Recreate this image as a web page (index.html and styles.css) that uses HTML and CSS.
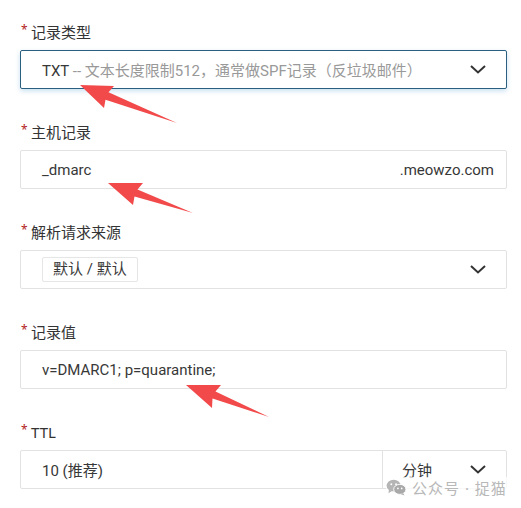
FILE: index.html
```html
<!DOCTYPE html>
<html lang="zh-CN">
<head>
<meta charset="utf-8">
<link rel="stylesheet" href="styles.css">
</head>
<body>
<div class="form">
  <div class="field">
    <div class="label"><span class="req">*</span>记录类型</div>
    <div class="box box-active">
      <span class="value">TXT <span class="hint">-- 文本长度限制512，通常做SPF记录（反垃圾邮件）</span></span>
      <svg class="chev" viewBox="0 0 16 9" width="16" height="9"><path d="M1 1 L8 7.5 L15 1" fill="none" stroke="#333" stroke-width="2"/></svg>
    </div>
  </div>
  <div class="field">
    <div class="label"><span class="req">*</span>主机记录</div>
    <div class="box">
      <span class="value">_dmarc</span>
      <span class="suffix">.meowzo.com</span>
    </div>
  </div>
  <div class="field">
    <div class="label"><span class="req">*</span>解析请求来源</div>
    <div class="box">
      <span class="tag">默认 / 默认</span>
      <svg class="chev" viewBox="0 0 16 9" width="16" height="9"><path d="M1 1 L8 7.5 L15 1" fill="none" stroke="#333" stroke-width="2"/></svg>
    </div>
  </div>
  <div class="field">
    <div class="label"><span class="req">*</span>记录值</div>
    <div class="box">
      <span class="value">v=DMARC1; p=quarantine;</span>
    </div>
  </div>
  <div class="field">
    <div class="label"><span class="req">*</span>TTL</div>
    <div class="box box-split">
      <span class="value ttl-value">10 (推荐)</span>
      <div class="unit">
        <span class="value">分钟</span>
        <svg class="chev" viewBox="0 0 16 9" width="16" height="9"><path d="M1 1 L8 7.5 L15 1" fill="none" stroke="#333" stroke-width="2"/></svg>
      </div>
    </div>
  </div>
</div>

<svg class="arrows" width="521" height="508" viewBox="0 0 521 508">
  <g fill="#f24a4a">
    <polygon points="80,85 114,86 108.5,92.3 177,123 105.5,99.7 104,108"/>
    <polygon points="108,183 143,183 137.5,189.5 193,213 134.5,196.5 133,205"/>
    <polygon points="186,385 221,385 215.5,391.5 269,417 212.5,398.5 212,408"/>
  </g>
</svg>

<div class="watermark">
  <svg class="wx" viewBox="0 0 22 18" width="21" height="17">
    <ellipse cx="8" cy="7" rx="7.5" ry="6.3" fill="#b5b5b5"/>
    <path d="M3 11.5 L2.5 15 L6.5 12.5 Z" fill="#b5b5b5"/>
    <ellipse cx="14.5" cy="11" rx="6.5" ry="5.3" fill="#a9a9a9" stroke="#fff" stroke-width="1"/>
    <path d="M18 15 L19.5 17.5 L15.5 15.8 Z" fill="#a9a9a9"/>
    <circle cx="5.5" cy="5.5" r="1" fill="#fff"/>
    <circle cx="10.5" cy="5.5" r="1" fill="#fff"/>
    <circle cx="12.5" cy="10" r="0.9" fill="#fff"/>
    <circle cx="16.5" cy="10" r="0.9" fill="#fff"/>
  </svg>
  <span>公众号 · 捉猫</span>
</div>
</body>
</html>
```

FILE: styles.css
```css
html, body {
  margin: 0;
  padding: 0;
  background: #fff;
}
body {
  width: 521px;
  height: 508px;
  position: relative;
  overflow: hidden;
  font-family: "Noto Sans", "Noto Sans CJK SC", sans-serif;
  color: #333;
}
.form {
  padding: 22px 0 0 20px;
  width: 487px;
  display: flex;
  flex-direction: column;
  gap: 33px;
}
.field {
  display: flex;
  flex-direction: column;
  gap: 8px;
}
.label {
  height: 20px;
  line-height: 20px;
  font-size: 15px;
  color: #333;
  display: flex;
  align-items: center;
}
.req {
  color: #b22222;
  font-size: 12px;
  width: 10px;
  margin-left: 1px;
  position: relative;
  top: -2px;
}
.box {
  box-sizing: border-box;
  height: 39px;
  border: 1px solid #e2e2e2;
  border-radius: 2px;
  display: flex;
  align-items: center;
  padding: 0 12px 0 21px;
  font-family: Roboto, "Noto Sans CJK SC", sans-serif;
  font-size: 15px;
  background: #fff;
}
.box-active {
  border-color: #2a5f80;
  box-shadow: 0 2px 5px rgba(40, 130, 200, 0.25);
}
.value {
  white-space: nowrap;
  color: #383838;
  flex: 1;
}
.hint {
  color: #999;
}
.suffix {
  color: #383838;
  white-space: nowrap;
}
.chev {
  flex: none;
  margin-right: 8px;
}
.tag {
  box-sizing: border-box;
  height: 25px;
  line-height: 23px;
  padding: 0 10px;
  border: 1px solid #e6e6e6;
  border-radius: 2px;
  margin-right: auto;
  color: #383838;
  white-space: nowrap;
}
.box-split {
  padding: 0;
}
.ttl-value {
  padding-left: 21px;
}
.unit {
  width: 124px;
  height: 100%;
  box-sizing: border-box;
  border-left: 1px solid #e2e2e2;
  display: flex;
  align-items: center;
  padding-left: 19px;
  padding-right: 12px;
}
.arrows {
  position: absolute;
  left: 0;
  top: 0;
  pointer-events: none;
}
.watermark {
  position: absolute;
  left: 386px;
  top: 477px;
  height: 20px;
  padding-right: 4px;
  display: flex;
  align-items: center;
  gap: 5px;
  white-space: nowrap;
  background: rgba(255, 255, 255, 0.75);
  color: #b8b8b8;
  font-size: 15px;
  letter-spacing: 1px;
}
```
